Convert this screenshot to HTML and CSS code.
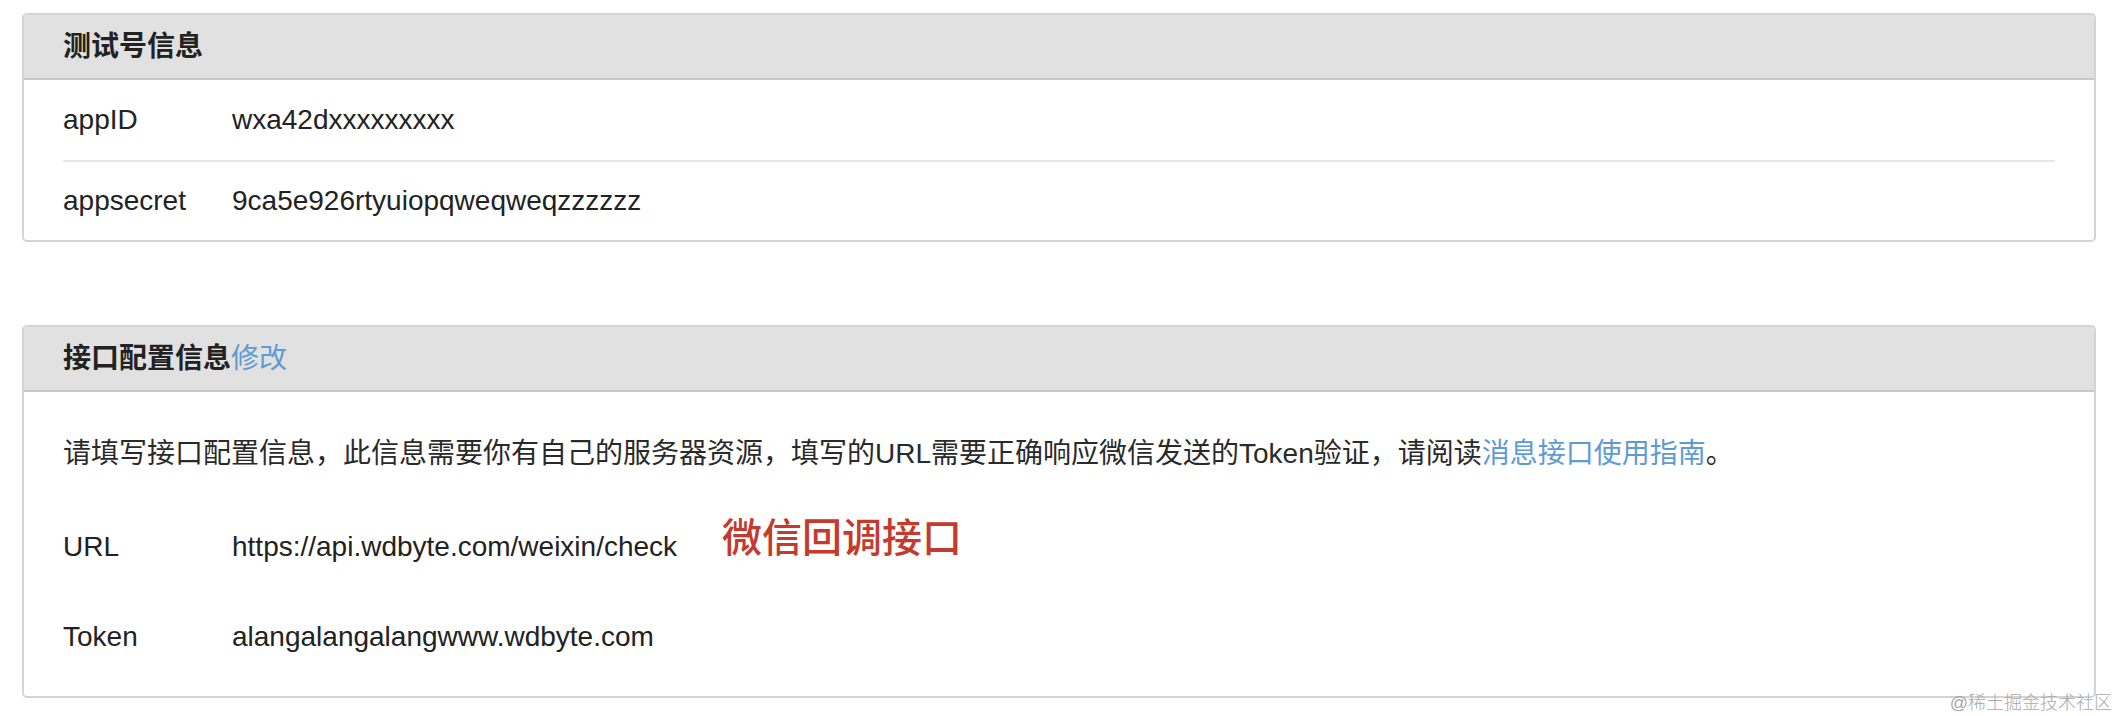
FILE: index.html
```html
<!DOCTYPE html>
<html lang="zh-CN">
<head>
<meta charset="utf-8">
<title>测试号管理</title>
<link rel="stylesheet" href="styles.css">
</head>
<body>
<div class="page">
  <section class="panel">
    <div class="panel-head">
      <h3 class="panel-title">测试号信息</h3>
    </div>
    <div class="panel-body">
      <div class="kv-row">
        <span class="kv-label">appID</span>
        <span class="kv-value">wxa42dxxxxxxxxx</span>
      </div>
      <div class="kv-row kv-row--sep">
        <span class="kv-label">appsecret</span>
        <span class="kv-value">9ca5e926rtyuiopqweqweqzzzzzz</span>
      </div>
    </div>
  </section>

  <section class="panel">
    <div class="panel-head">
      <h3 class="panel-title">接口配置信息<a class="panel-link" href="#">修改</a></h3>
    </div>
    <div class="panel-body panel-body--config">
      <p class="desc">请填写接口配置信息，此信息需要你有自己的服务器资源，填写的URL需要正确响应微信发送的Token验证，请阅读<a class="link" href="#">消息接口使用指南</a>。</p>
      <div class="kv-row kv-row--tall">
        <span class="kv-label">URL</span>
        <span class="kv-value">https://api.wdbyte.com/weixin/check<span class="note">微信回调接口</span></span>
      </div>
      <div class="kv-row kv-row--tall">
        <span class="kv-label">Token</span>
        <span class="kv-value">alangalangalangwww.wdbyte.com</span>
      </div>
    </div>
  </section>
</div>
<div class="watermark">@稀土掘金技术社区</div>
</body>
</html>
```

FILE: styles.css
```css
html, body {
  margin: 0;
  background: #ffffff;
}

body {
  font-family: "Liberation Sans", "Noto Sans CJK SC", sans-serif;
  color: #222222;
  position: relative;
  min-height: 716px;
}

.page {
  padding: 13px 22px 0;
  display: flex;
  flex-direction: column;
  gap: 83px;
}

.panel {
  border: 2px solid #d4d4d4;
  border-radius: 5px;
  background: #ffffff;
  overflow: hidden;
}

.panel-head {
  background: #e1e1e1;
  border-bottom: 2px solid #c9c9c9;
  height: 63px;
  display: flex;
  align-items: center;
  padding: 0 39px;
}

.panel-title {
  margin: 0;
  font-size: 28px;
  font-weight: bold;
  color: #222222;
  line-height: 1;
}

.panel-link {
  color: #5d9bd7;
  font-weight: normal;
  text-decoration: none;
}

.panel-body {
  padding: 0 39px;
}

.panel-body--config {
  padding-top: 30px;
  padding-bottom: 14px;
}

.kv-row {
  display: flex;
  align-items: center;
  height: 80px;
  font-size: 28px;
  line-height: 32px;
}

.kv-row--sep {
  border-top: 2px solid #e6e6e6;
  height: 78px;
}

.kv-row--tall {
  height: 90px;
}

.kv-label {
  flex: none;
  width: 169px;
}

.kv-value {
  white-space: nowrap;
}

.desc {
  margin: 0 0 16px;
  font-size: 28px;
  line-height: 64px;
  color: #2a2a2a;
}

.link {
  color: #5d9bd7;
  text-decoration: none;
}

.note {
  margin-left: 45px;
  font-size: 40px;
  line-height: 0;
  font-weight: 500;
  color: #c43a2c;
  vertical-align: 4px;
}

.watermark {
  position: absolute;
  right: 6px;
  top: 688px;
  font-size: 18px;
  color: #a9a9a9;
  font-weight: 300;
  white-space: nowrap;
}
```
